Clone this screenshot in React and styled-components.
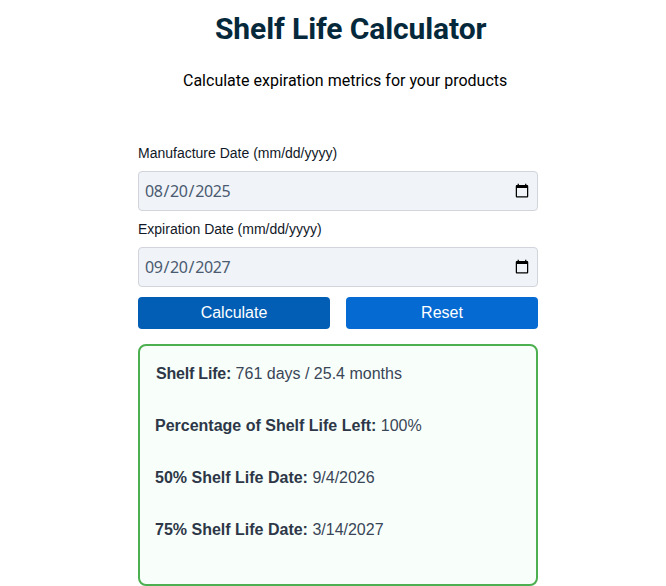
import React, { useState } from 'react';
import styled, { createGlobalStyle } from 'styled-components';

const GlobalStyle = createGlobalStyle`
  html, body {
    margin: 0;
    padding: 0;
    background: #ffffff;
    overflow: hidden;
  }
`;

const Page = styled.div`
  width: 666px;
  height: 586px;
  overflow: hidden;
  display: flex;
  flex-direction: column;
  align-items: flex-start;
`;

const Title = styled.h1`
  margin: 11px 0 0 215px;
  font-family: Roboto, sans-serif;
  font-size: 30px;
  line-height: 36px;
  font-weight: 700;
  letter-spacing: -0.1px;
  color: #05293b;
  white-space: nowrap;
`;

const Subtitle = styled.p`
  margin: 24px 0 0 183px;
  font-family: Roboto, sans-serif;
  font-size: 16px;
  line-height: 19px;
  color: #000000;
  white-space: nowrap;
`;

const Form = styled.form`
  width: 400px;
  margin: 55px 0 0 138px;
  display: flex;
  flex-direction: column;
`;

const Label = styled.label`
  display: block;
  height: 16px;
  margin-bottom: 10px;
  font-family: 'Liberation Sans', Arial, sans-serif;
  font-size: 14px;
  line-height: 16px;
  color: #111827;
`;

const DateInput = styled.input`
  box-sizing: border-box;
  display: block;
  width: 400px;
  height: 40px;
  margin-bottom: 10px;
  padding: 0 5px;
  border: 1px solid #d1d5db;
  border-radius: 4px;
  background: #f0f4f8;
  font-family: 'Noto Sans', sans-serif;
  font-size: 16px;
  letter-spacing: -0.4px;
  color: #4a5a70;
`;

const Buttons = styled.div`
  display: flex;
  gap: 16px;
`;

const Button = styled.button`
  flex: 1;
  height: 32px;
  padding: 0;
  border: none;
  border-radius: 4px;
  background: ${(p) => (p.$primary ? '#025eb4' : '#056bd3')};
  font-family: 'Liberation Sans', Arial, sans-serif;
  font-size: 16px;
  color: #ffffff;
  cursor: pointer;
`;

const Results = styled.div`
  box-sizing: border-box;
  width: 400px;
  height: 242px;
  margin: 15px 0 0 138px;
  padding: 18px 15px;
  border: 2px solid #4caf50;
  border-radius: 8px;
  background: #f8fffa;
`;

const Row = styled.p`
  margin: 0 0 32px ${(p) => (p.$nudge ? '1px' : '0')};
  font-family: 'Liberation Sans', Arial, sans-serif;
  font-size: 16px;
  line-height: 20px;
  color: #3a4557;
  white-space: nowrap;

  strong {
    color: #2d3748;
    letter-spacing: ${(p) => (p.$nudge ? '-0.2px' : '0')};
  }
`;

export default function App() {
  const [manufacture, setManufacture] = useState('2025-08-20');
  const [expiration, setExpiration] = useState('2027-09-20');

  return (
    <Page>
      <GlobalStyle />
      <Title>Shelf Life Calculator</Title>
      <Subtitle>Calculate expiration metrics for your products</Subtitle>
      <Form onSubmit={(e) => e.preventDefault()}>
        <Label htmlFor="manufacture">Manufacture Date (mm/dd/yyyy)</Label>
        <DateInput
          id="manufacture"
          type="date"
          value={manufacture}
          onChange={(e) => setManufacture(e.target.value)}
        />
        <Label htmlFor="expiration">Expiration Date (mm/dd/yyyy)</Label>
        <DateInput
          id="expiration"
          type="date"
          value={expiration}
          onChange={(e) => setExpiration(e.target.value)}
        />
        <Buttons>
          <Button $primary type="submit">Calculate</Button>
          <Button type="button">Reset</Button>
        </Buttons>
      </Form>
      <Results>
        <Row $nudge><strong>Shelf Life:</strong> 761 days / 25.4 months</Row>
        <Row><strong>Percentage of Shelf Life Left:</strong> 100%</Row>
        <Row><strong>50% Shelf Life Date:</strong> 9/4/2026</Row>
        <Row><strong>75% Shelf Life Date:</strong> 3/14/2027</Row>
      </Results>
    </Page>
  );
}
